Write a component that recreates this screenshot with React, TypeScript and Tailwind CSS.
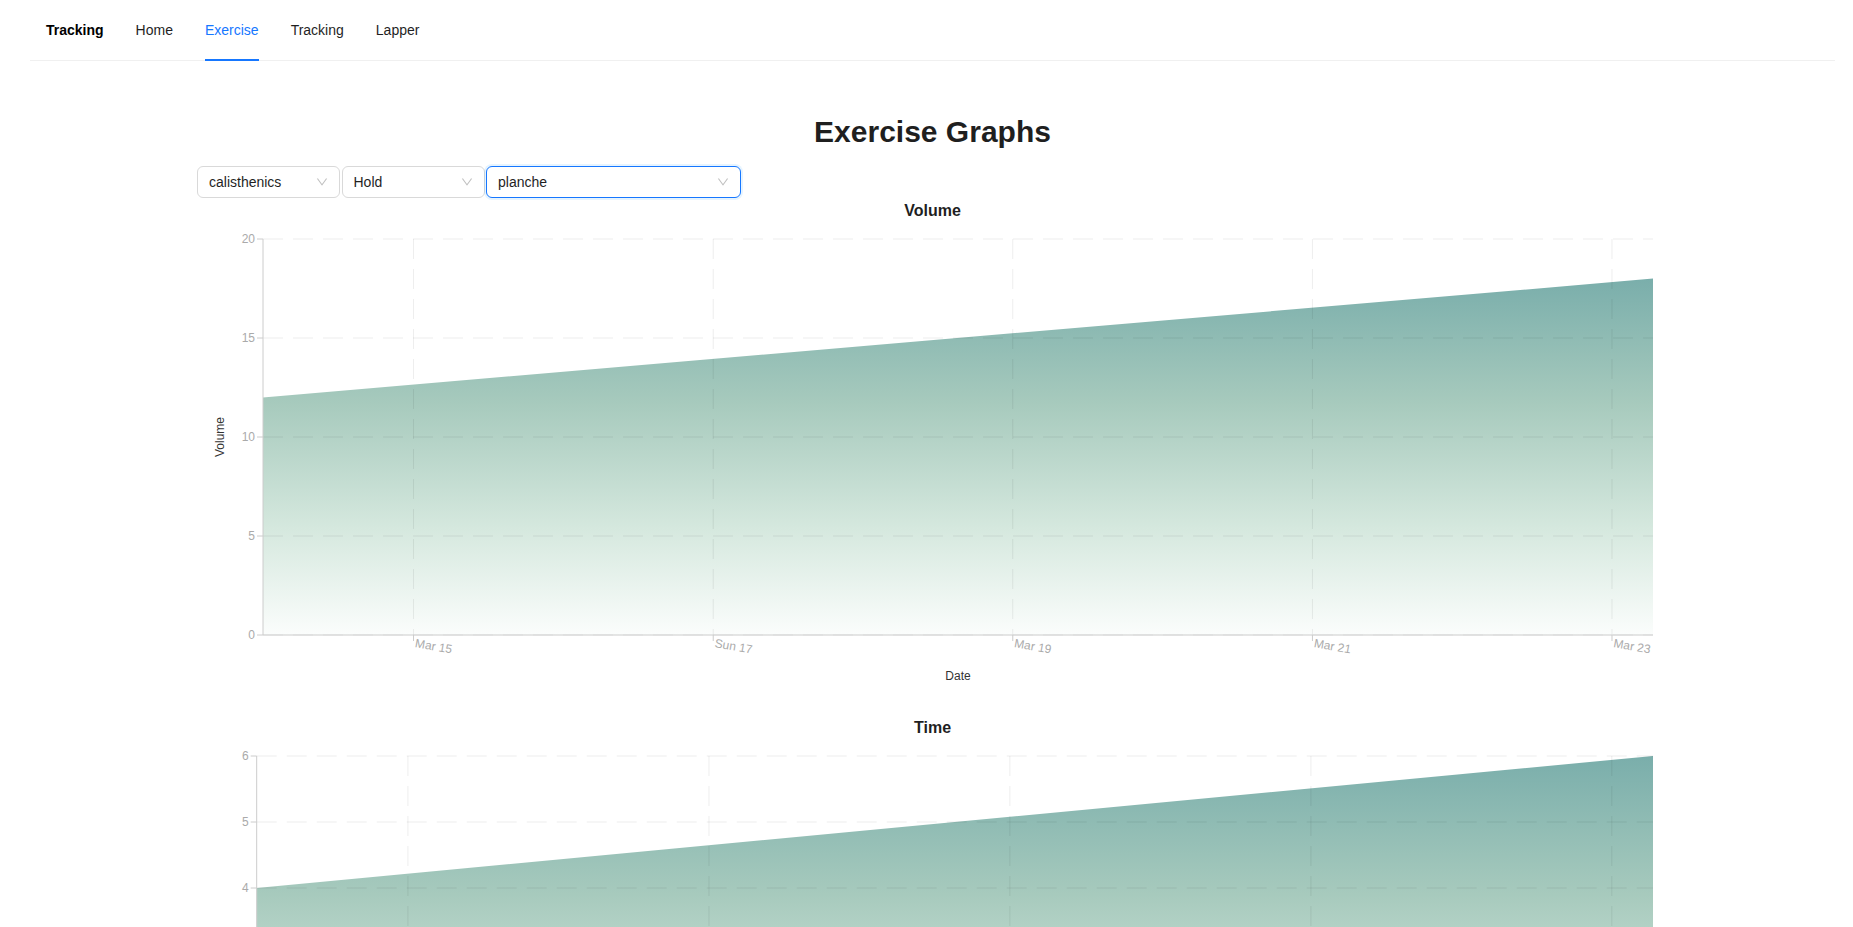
import React from "react";

const W = 1471;
const H = 492;
const PR = 1456;
const PT = 16;
const PB = 412;
const FR = [0.1083, 0.3239, 0.5394, 0.755, 0.9705];
const XL = ["Mar 15", "Sun 17", "Mar 19", "Mar 21", "Mar 23"];

function Chevron() {
  return (
    <svg viewBox="64 64 896 896" width="12" height="12" fill="rgba(0,0,0,0.25)">
      <path d="M884 256h-75c-5.1 0-9.9 2.5-12.9 6.6L512 654.2 227.9 262.6c-3-4.1-7.8-6.6-12.9-6.6h-75c-6.5 0-10.3 7.4-6.5 12.7l352.6 486.1c12.8 17.6 39 17.6 51.7 0l352.6-486.1c3.9-5.3.1-12.7-6.4-12.7z" />
    </svg>
  );
}

function Select({ label, w, focused }: { label: string; w: string; focused?: boolean }) {
  return (
    <div
      className={`${w} h-[32px] flex items-center justify-between pl-[11px] pr-[11px] rounded-[6px] border bg-white text-[14px] text-[#1f1f1f] ${
        focused ? "border-[#1677ff] shadow-[0_0_0_2px_rgba(5,145,255,0.1)]" : "border-[#d9d9d9]"
      }`}
    >
      <span className="leading-[30px]">{label}</span>
      <Chevron />
    </div>
  );
}

function Chart({
  id,
  title,
  x0,
  yMax,
  yTicks,
  v0,
  v1,
  yLabel,
  yLabelX,
}: {
  id: string;
  title: string;
  x0: number;
  yMax: number;
  yTicks: number[];
  v0: number;
  v1: number;
  yLabel: string;
  yLabelX: number;
}) {
  const ph = PB - PT;
  const y = (v: number) => PB - (v / yMax) * ph;
  const xs = FR.map((f) => x0 + f * (PR - x0));
  const grid = "rgba(0,0,0,0.07)";
  const axis = "#cccccc";
  return (
    <div className="flex flex-col">
      <div className="h-[25px] pt-[1px] leading-[24px] text-center text-[16px] font-bold text-[#1f1f1f]">{title}</div>
      <svg width={W} height={H} className="block" style={{ fontFamily: "'Liberation Sans', Arial, sans-serif" }}>
        <defs>
          <linearGradient id={id} x1="0" y1="0" x2="0" y2="1">
            <stop offset="0" stopColor="#7aaeab" />
            <stop offset="0.35" stopColor="#a7cabd" />
            <stop offset="0.7" stopColor="#d5e8de" />
            <stop offset="1" stopColor="#fbfdfc" />
          </linearGradient>
        </defs>
        <polygon
          points={`${x0},${y(v0)} ${PR},${y(v1)} ${PR},${PB} ${x0},${PB}`}
          fill={`url(#${id})`}
        />
        {yTicks.map((t) => (
          <line key={"h" + t} x1={x0} x2={PR} y1={y(t)} y2={y(t)} stroke={grid} strokeDasharray="20 10" />
        ))}
        {xs.map((x, i) => (
          <line key={"v" + i} x1={x} x2={x} y1={PT} y2={PB} stroke={grid} strokeDasharray="20 10" />
        ))}
        <line x1={x0} x2={x0} y1={PT} y2={PB} stroke={axis} />
        <line x1={x0} x2={PR} y1={PB} y2={PB} stroke={axis} />
        {yTicks.map((t) => (
          <g key={"yt" + t}>
            <line x1={x0 - 6} x2={x0} y1={y(t)} y2={y(t)} stroke={axis} />
            <text x={x0 - 8} y={y(t)} dy="0.355em" textAnchor="end" fontSize="12" fill="#aaaaaa">
              {t}
            </text>
          </g>
        ))}
        {xs.map((x, i) => (
          <g key={"xt" + i}>
            <line x1={x} x2={x} y1={PB} y2={PB + 6} stroke={axis} />
            <text
              x={x + 1}
              y={PB + 12}
              fontSize="12"
              fill="#aaaaaa"
              transform={`rotate(10 ${x + 1} ${PB + 12})`}
            >
              {XL[i]}
            </text>
          </g>
        ))}
        <text
          x={yLabelX}
          y={(PT + PB) / 2}
          fontSize="12"
          fill="#333333"
          textAnchor="middle"
          dominantBaseline="central"
          transform={`rotate(-90 ${yLabelX} ${(PT + PB) / 2})`}
        >
          {yLabel}
        </text>
        <text x={(x0 + PR) / 2} y={453} fontSize="12" fill="#333333" textAnchor="middle" dominantBaseline="central">
          Date
        </text>
      </svg>
    </div>
  );
}

export default function App() {
  return (
    <div className="h-screen overflow-hidden bg-white font-['Liberation_Sans',Arial,sans-serif]">
      <div className="pl-[30px] pr-[18px]">
        <nav className="h-[61px] flex items-stretch border-b border-[#f0f0f0] text-[14px]">
          <div className="px-4 leading-[60px] font-bold text-black">Tracking</div>
          <div className="px-4 leading-[60px] text-[#1f1f1f]">Home</div>
          <div className="px-4 leading-[60px] text-[#1677ff] relative">
            Exercise
            <div className="absolute left-4 right-4 bottom-[-1px] h-[2px] bg-[#1677ff]" />
          </div>
          <div className="px-4 leading-[60px] text-[#1f1f1f]">Tracking</div>
          <div className="px-4 leading-[60px] text-[#1f1f1f]">Lapper</div>
        </nav>
        <main className="px-[167px]">
          <h2 className="mt-[51px] text-center text-[30px] leading-[40.5px] font-semibold text-[#1f1f1f]">
            Exercise Graphs
          </h2>
          <div className="mt-[13.5px] flex gap-[1.5px]">
            <Select label="calisthenics" w="w-[143px]" />
            <Select label="Hold" w="w-[143px]" />
            <Select label="planche" w="w-[255px]" focused />
          </div>
          <Chart
            id="g1"
            title="Volume"
            x0={66}
            yMax={20}
            yTicks={[0, 5, 10, 15, 20]}
            v0={12}
            v1={18}
            yLabel="Volume"
            yLabelX={23}
          />
          <Chart
            id="g2"
            title="Time"
            x0={59.7}
            yMax={6}
            yTicks={[0, 1, 2, 3, 4, 5, 6]}
            v0={4}
            v1={6}
            yLabel="Time"
            yLabelX={17}
          />
        </main>
      </div>
    </div>
  );
}
